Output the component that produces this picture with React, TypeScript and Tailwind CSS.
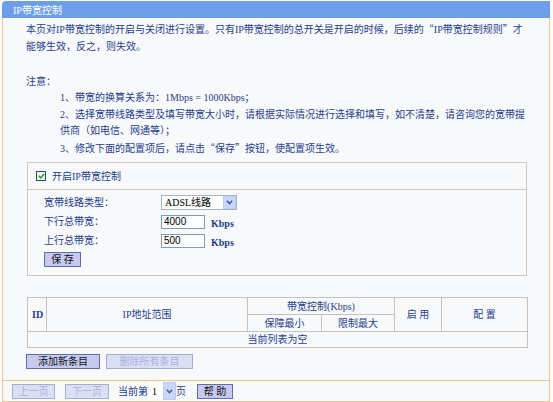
import React from 'react'

const font = "font-['Liberation_Serif','Noto_Sans_CJK_SC',serif]"

function Q({ children }: { children: React.ReactNode }) {
  return <span className="font-['Noto_Sans_CJK_SC',sans-serif]">{children}</span>
}

function Chevron() {
  return (
    <svg width="7" height="5" viewBox="0 0 7 5">
      <path d="M0.8 0.8 L3.5 3.6 L6.2 0.8" fill="none" stroke="#4d6185" strokeWidth="1.6" />
    </svg>
  )
}

function Arrow() {
  return (
    <span className="flex h-full w-[13px] items-center justify-center border border-[#b9ccf5] bg-[#c8d8fb]">
      <Chevron />
    </span>
  )
}

function Button({ label, w, disabled }: { label: string; w: string; disabled?: boolean }) {
  return (
    <button
      disabled={disabled}
      className={
        disabled
          ? `${w} h-[15px] border border-[#a4acda] bg-[#dcdff4] text-[10px] leading-[13px] text-[#abb3de]`
          : `${w} h-[15px] border border-[#5d6cb6] bg-[#c6caef] text-[10px] leading-[13px] text-[#111]`
      }
    >
      {label}
    </button>
  )
}

function FormRow({ label, children }: { label: string; children: React.ReactNode }) {
  return (
    <div className="flex h-[19px] items-center">
      <span className="w-[117px] whitespace-nowrap">{label}</span>
      {children}
    </div>
  )
}

function Input({ value }: { value: string }) {
  return (
    <div className="flex h-[14px] w-[44px] items-center border border-[#7f9db9] bg-white pl-[2px] font-['Liberation_Sans',sans-serif] text-[10px] text-black">
      {value}
    </div>
  )
}

export default function App() {
  const cell = 'border border-[#c3c3c3]'
  return (
    <div className={`pl-[2px] pt-[1px] text-[10px] text-[#1f3d8c] ${font}`}>
      <div className="w-[548px]">
        <div className="h-[17px] rounded-tl-[4px] bg-[#6d9eeb] pl-[11px] leading-[19px] text-white">
          IP带宽控制
        </div>

        <div className="border-x border-[#f4c291] bg-[#f8f9fb] pb-[11px] pt-[2px]">
          <div className="pl-[23px] leading-[17px]">
            <div className="whitespace-nowrap">
              本页对IP带宽控制的开启与关闭进行设置。只有IP带宽控制的总开关是开启的时候，后续的<Q>“</Q>IP带宽控制规则<Q>”</Q>才
            </div>
            <div className="whitespace-nowrap">能够生效，反之，则失效。</div>
            <div className="mt-[18px]">注意：</div>
          </div>
          <div className="pl-[57px] leading-[16.5px]">
            <div className="whitespace-nowrap">1、带宽的换算关系为：1Mbps = 1000Kbps；</div>
            <div className="whitespace-nowrap">
              2、选择宽带线路类型及填写带宽大小时，请根据实际情况进行选择和填写，如不清楚，请咨询您的宽带提
            </div>
            <div className="whitespace-nowrap">供商（如电信、网通等）；</div>
            <div className="whitespace-nowrap">
              3、修改下面的配置项后，请点击<Q>“</Q>保存<Q>”</Q>按钮，使配置项生效。
            </div>
          </div>

          <div className="ml-[24px] mt-[5px] h-[114px] w-[500px] border border-[#c8c8c8]">
            <div className="flex h-[27px] items-center border-b border-[#c8c8c8] pl-[8px]">
              <span className="flex h-[10px] w-[10px] items-center justify-center border border-[#1c5180] bg-[#f4f4ee]">
                <svg width="7" height="6" viewBox="0 0 7 6">
                  <path d="M0.8 2.8 L2.7 4.8 L6.2 0.9" fill="none" stroke="#21a121" strokeWidth="1.5" />
                </svg>
              </span>
              <span className="ml-[6px]">开启IP带宽控制</span>
            </div>
            <div className="pl-[16px] pt-[3px]">
              <FormRow label="宽带线路类型：">
                <div className="flex h-[15px] w-[76px] items-center border border-[#a7b3c7] bg-white">
                  <span className="flex-1 whitespace-nowrap pl-[3px] text-[10px] text-black">ADSL线路</span>
                  <Arrow />
                </div>
              </FormRow>
              <FormRow label="下行总带宽：">
                <Input value="4000" />
                <span className="ml-[6px] mt-[3px] font-bold">Kbps</span>
              </FormRow>
              <FormRow label="上行总带宽：">
                <Input value="500" />
                <span className="ml-[6px] mt-[3px] font-bold">Kbps</span>
              </FormRow>
              <div className="flex h-[19px] items-center">
                <Button label="保 存" w="w-[37px]" />
              </div>
            </div>
          </div>

          <table className="ml-[24px] mt-[21px] w-[500px] table-fixed border-collapse text-center leading-[15px]">
            <colgroup>
              <col className="w-[19px]" />
              <col className="w-[201px]" />
              <col className="w-[74px]" />
              <col className="w-[73px]" />
              <col className="w-[47px]" />
              <col className="w-[86px]" />
            </colgroup>
            <tbody>
              <tr className="h-[17px]">
                <td rowSpan={2} className={`${cell} pl-[4px] text-left font-bold`}>
                  ID
                </td>
                <td rowSpan={2} className={cell}>
                  IP地址范围
                </td>
                <td colSpan={2} className={cell}>
                  带宽控制(Kbps)
                </td>
                <td rowSpan={2} className={cell}>
                  启 用
                </td>
                <td rowSpan={2} className={cell}>
                  配 置
                </td>
              </tr>
              <tr className="h-[17px]">
                <td className={cell}>保障最小</td>
                <td className={cell}>限制最大</td>
              </tr>
              <tr className="h-[16px]">
                <td colSpan={6} className={cell}>
                  当前列表为空
                </td>
              </tr>
            </tbody>
          </table>

          <div className="ml-[23px] mt-[6px] flex gap-[6px]">
            <Button label="添加新条目" w="w-[74px]" />
            <Button label="删除所有条目" w="w-[87px]" disabled />
          </div>
        </div>

        <div className="flex h-[22px] items-center border border-[#f4c291] bg-[#f8f9fb] pl-[9px]">
          <Button label="上一页" w="w-[43px]" disabled />
          <span className="ml-[10px]">
            <Button label="下一页" w="w-[44px]" disabled />
          </span>
          <span className="ml-[9px] whitespace-nowrap">当前第</span>
          <div className="ml-[1px] flex h-[18px] w-[27px] items-center bg-white">
            <span className="flex-1 pl-[3px] text-black">1</span>
            <Arrow />
          </div>
          <span>页</span>
          <span className="ml-[11px]">
            <Button label="帮 助" w="w-[36px]" />
          </span>
        </div>
      </div>
    </div>
  )
}
